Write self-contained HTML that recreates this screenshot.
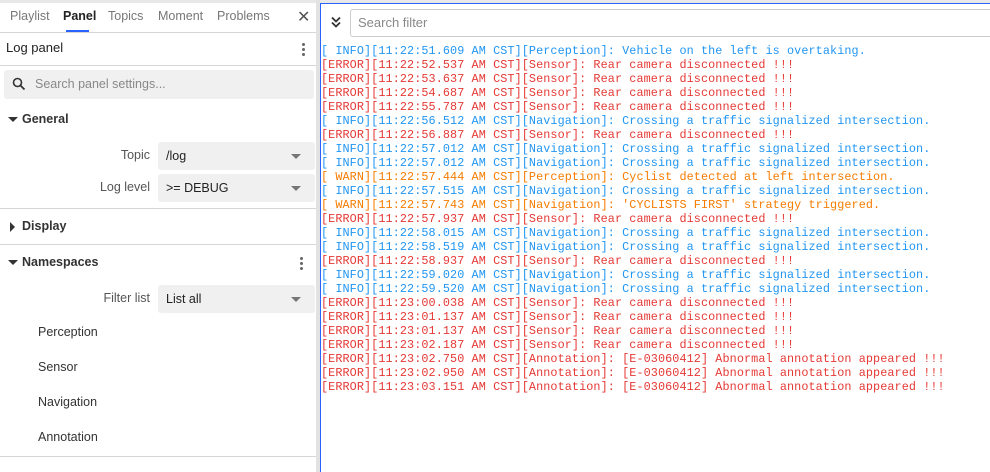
<!DOCTYPE html>
<html><head><meta charset="utf-8"><style>
*{box-sizing:border-box;margin:0;padding:0}
body{width:990px;height:472px;overflow:hidden;background:#fff;font-family:"Liberation Sans",sans-serif;position:relative;color:#222}
.a{position:absolute}
.tab{position:absolute;top:9px;font-size:12.5px;color:#777}
.hr{position:absolute;left:0;width:316px;height:1px;background:#d6d6d6}
.lbl{position:absolute;font-size:12.5px;color:#555;text-align:right;width:150px;left:0}
.sel{position:absolute;left:158px;width:157px;height:28px;background:#f0f0f0;border-radius:3px;font-size:12.5px;color:#222;padding:7px 0 0 8px}
.sel:after{content:"";position:absolute;right:14px;top:12px;border-left:5px solid transparent;border-right:5px solid transparent;border-top:5px solid #777}
.sec{position:absolute;left:22px;font-size:12.5px;font-weight:bold;color:#333}
.tri{position:absolute;left:8px;width:0;height:0}
.ns{position:absolute;left:38px;font-size:12.5px;color:#333}
.dots{position:absolute;width:3px}
.dots i{display:block;width:3px;height:3px;border-radius:50%;background:#666;margin-bottom:2px}
#log{position:absolute;left:321px;top:44px;font-family:"Liberation Mono",monospace;font-size:11.8px;letter-spacing:0.09px;line-height:14px;white-space:pre}
.i{color:#2196f3}.e{color:#e53935}.w{color:#f57c00}
</style></head><body>
<div class="a" style="left:0;top:0;width:990px;height:3px;background:#e8e8e8"></div>
<div class="tab" style="left:10px">Playlist</div>
<div class="tab" style="left:63px;color:#222;font-weight:bold">Panel</div>
<div class="a" style="left:66px;top:30px;width:23px;height:2px;background:#2962ff"></div>
<div class="tab" style="left:108px">Topics</div>
<div class="tab" style="left:158px">Moment</div>
<div class="tab" style="left:217px">Problems</div>
<div class="a" style="left:297px;top:7px;font-size:16px;color:#555">✕</div>
<div class="hr" style="top:32px"></div>
<div class="a" style="left:6px;top:40px;font-size:13px;color:#222">Log panel</div>
<div class="dots" style="left:302px;top:43px"><i></i><i></i><i></i></div>
<div class="hr" style="top:65px"></div>
<div class="a" style="left:4px;top:70px;width:310px;height:29px;background:#f0f0f0;border-radius:3px"></div>
<svg class="a" style="left:12px;top:77px" width="14" height="14" viewBox="0 0 14 14"><circle cx="5.5" cy="5.5" r="4" fill="none" stroke="#333" stroke-width="1.6"/><path d="M8.5 8.5L12.5 12.5" stroke="#333" stroke-width="1.8"/></svg>
<div class="a" style="left:35px;top:77px;font-size:12.5px;color:#888">Search panel settings...</div>
<div class="tri" style="top:117px;border-left:5px solid transparent;border-right:5px solid transparent;border-top:5px solid #333"></div>
<div class="sec" style="top:112px">General</div>
<div class="lbl" style="top:148px">Topic</div>
<div class="sel" style="top:142px">/log</div>
<div class="lbl" style="top:180px">Log level</div>
<div class="sel" style="top:174px">&gt;= DEBUG</div>
<div class="hr" style="top:208px"></div>
<div class="tri" style="left:10px;top:222px;border-top:5px solid transparent;border-bottom:5px solid transparent;border-left:5px solid #333"></div>
<div class="sec" style="top:219px">Display</div>
<div class="hr" style="top:244px"></div>
<div class="tri" style="top:260px;border-left:5px solid transparent;border-right:5px solid transparent;border-top:5px solid #333"></div>
<div class="sec" style="top:255px">Namespaces</div>
<div class="dots" style="left:300px;top:257px"><i></i><i></i><i></i></div>
<div class="lbl" style="top:291px">Filter list</div>
<div class="sel" style="top:285px">List all</div>
<div class="ns" style="top:325px">Perception</div>
<div class="ns" style="top:360px">Sensor</div>
<div class="ns" style="top:395px">Navigation</div>
<div class="ns" style="top:430px">Annotation</div>
<div class="hr" style="top:456px"></div>
<div class="a" style="left:316px;top:0;width:4px;height:472px;background:#e2e2e2"></div>
<div class="a" style="left:320px;top:3px;width:670px;height:469px;border:1px solid #2962ff;border-right:none;border-bottom:none"></div>
<svg class="a" style="left:329px;top:15px" width="14" height="14" viewBox="0 0 14 14"><path d="M3 2.5L7 6.5L11 2.5M3 7.5L7 11.5L11 7.5" fill="none" stroke="#333" stroke-width="1.8"/></svg>
<div class="a" style="left:350px;top:9px;width:640px;height:28px;border:1px solid #ccc;border-right:none;border-radius:3px 0 0 3px"></div>
<div class="a" style="left:358px;top:15px;font-size:13px;color:#888">Search filter</div>
<div id="log"><span class="i">[ INFO][11:22:51.609 AM CST][Perception]: Vehicle on the left is overtaking.</span>
<span class="e">[ERROR][11:22:52.537 AM CST][Sensor]: Rear camera disconnected !!!</span>
<span class="e">[ERROR][11:22:53.637 AM CST][Sensor]: Rear camera disconnected !!!</span>
<span class="e">[ERROR][11:22:54.687 AM CST][Sensor]: Rear camera disconnected !!!</span>
<span class="e">[ERROR][11:22:55.787 AM CST][Sensor]: Rear camera disconnected !!!</span>
<span class="i">[ INFO][11:22:56.512 AM CST][Navigation]: Crossing a traffic signalized intersection.</span>
<span class="e">[ERROR][11:22:56.887 AM CST][Sensor]: Rear camera disconnected !!!</span>
<span class="i">[ INFO][11:22:57.012 AM CST][Navigation]: Crossing a traffic signalized intersection.</span>
<span class="i">[ INFO][11:22:57.012 AM CST][Navigation]: Crossing a traffic signalized intersection.</span>
<span class="w">[ WARN][11:22:57.444 AM CST][Perception]: Cyclist detected at left intersection.</span>
<span class="i">[ INFO][11:22:57.515 AM CST][Navigation]: Crossing a traffic signalized intersection.</span>
<span class="w">[ WARN][11:22:57.743 AM CST][Navigation]: 'CYCLISTS FIRST' strategy triggered.</span>
<span class="e">[ERROR][11:22:57.937 AM CST][Sensor]: Rear camera disconnected !!!</span>
<span class="i">[ INFO][11:22:58.015 AM CST][Navigation]: Crossing a traffic signalized intersection.</span>
<span class="i">[ INFO][11:22:58.519 AM CST][Navigation]: Crossing a traffic signalized intersection.</span>
<span class="e">[ERROR][11:22:58.937 AM CST][Sensor]: Rear camera disconnected !!!</span>
<span class="i">[ INFO][11:22:59.020 AM CST][Navigation]: Crossing a traffic signalized intersection.</span>
<span class="i">[ INFO][11:22:59.520 AM CST][Navigation]: Crossing a traffic signalized intersection.</span>
<span class="e">[ERROR][11:23:00.038 AM CST][Sensor]: Rear camera disconnected !!!</span>
<span class="e">[ERROR][11:23:01.137 AM CST][Sensor]: Rear camera disconnected !!!</span>
<span class="e">[ERROR][11:23:01.137 AM CST][Sensor]: Rear camera disconnected !!!</span>
<span class="e">[ERROR][11:23:02.187 AM CST][Sensor]: Rear camera disconnected !!!</span>
<span class="e">[ERROR][11:23:02.750 AM CST][Annotation]: [E-03060412] Abnormal annotation appeared !!!</span>
<span class="e">[ERROR][11:23:02.950 AM CST][Annotation]: [E-03060412] Abnormal annotation appeared !!!</span>
<span class="e">[ERROR][11:23:03.151 AM CST][Annotation]: [E-03060412] Abnormal annotation appeared !!!</span></div>
</body></html>
